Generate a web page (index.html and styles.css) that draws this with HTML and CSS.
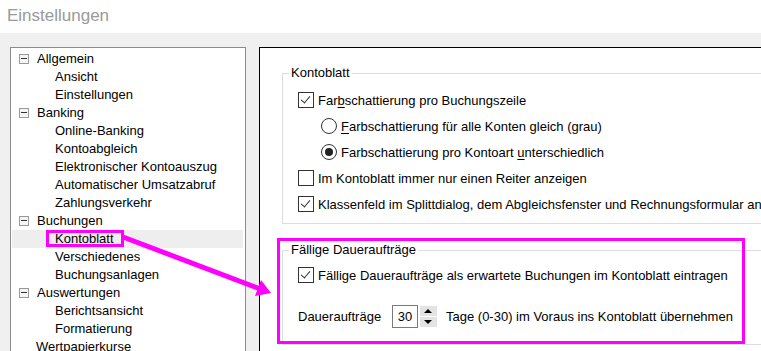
FILE: index.html
```html
<!DOCTYPE html>
<html lang="de">
<head>
  <meta charset="UTF-8" />
  <title>Einstellungen</title>
  <link rel="stylesheet" href="styles.css">
</head>
<body>
  <div class="titlebar">Einstellungen</div>

  <div class="main">
    <ul class="tree">
      <li class="node"><span class="toggle"></span>Allgemein</li>
      <li class="leaf">Ansicht</li>
      <li class="leaf">Einstellungen</li>
      <li class="node"><span class="toggle"></span>Banking</li>
      <li class="leaf">Online-Banking</li>
      <li class="leaf">Kontoabgleich</li>
      <li class="leaf">Elektronischer Kontoauszug</li>
      <li class="leaf">Automatischer Umsatzabruf</li>
      <li class="leaf">Zahlungsverkehr</li>
      <li class="node"><span class="toggle"></span>Buchungen</li>
      <li class="leaf selected">Kontoblatt</li>
      <li class="leaf">Verschiedenes</li>
      <li class="leaf">Buchungsanlagen</li>
      <li class="node"><span class="toggle"></span>Auswertungen</li>
      <li class="leaf">Berichtsansicht</li>
      <li class="leaf">Formatierung</li>
      <li class="node plain">Wertpapierkurse</li>
    </ul>

    <div class="page">
      <fieldset class="group group-konto">
        <legend>Kontoblatt</legend>
        <div class="row"><span class="check on"></span><span>Far<u>b</u>schattierung pro Buchungszeile</span></div>
        <div class="row sub"><span class="radio"></span><span><u>F</u>arbschattierung für alle Konten gleich (grau)</span></div>
        <div class="row sub"><span class="radio on"></span><span>Farbschattierung pro Kontoart <u>u</u>nterschiedlich</span></div>
        <div class="row"><span class="check"></span><span>Im Kontoblatt immer nur einen Reiter anzeigen</span></div>
        <div class="row"><span class="check on"></span><span>Klassenfeld im Splittdialog, dem Abgleichsfenster und Rechnungsformular anzeigen</span></div>
      </fieldset>

      <fieldset class="group group-dauer">
        <legend>Fällige Daueraufträge</legend>
        <div class="row"><span class="check on"></span><span>Fällige Daueraufträge als erwartete Buchungen im Kontoblatt eintragen</span></div>
        <div class="row spin-row">
          <span class="spin-label">Daueraufträge</span>
          <span class="spin-value">30</span>
          <span class="spin-buttons">
            <span class="spin-btn up"></span>
            <span class="spin-btn down"></span>
          </span>
          <span class="spin-text">Tage (0-30) im Voraus ins Kontoblatt übernehmen</span>
        </div>
      </fieldset>
    </div>
  </div>

  <svg class="annotations" width="761" height="351" viewBox="0 0 761 351">
    <rect x="47.5" y="231.5" width="75" height="14" fill="none" stroke="#ff00ff" stroke-width="3"/>
    <rect x="278.5" y="239.5" width="465" height="103" fill="none" stroke="#ff00ff" stroke-width="3"/>
    <line x1="123" y1="237" x2="259" y2="288.5" stroke="#ff00ff" stroke-width="5"/>
    <polygon points="271,293 255,296 261,280" fill="#ff00ff"/>
  </svg>
</body>
</html>
```

FILE: styles.css
```css
html, body {
  margin: 0;
  overflow: hidden;
}
body {
  width: 761px;
  height: 351px;
  background: #f0f0f0;
  font-family: 'Liberation Sans', Arial, sans-serif;
  font-size: 13px;
  color: #000;
  position: relative;
}
.titlebar {
  height: 33px;
  line-height: 32px;
  background: #fff;
  color: #999;
  font-size: 17px;
  padding-left: 7px;
}
.main {
  display: flex;
  padding-top: 14px;
}

/* tree */
.tree {
  list-style: none;
  margin: 0 0 0 10px;
  padding: 2px 0 0 0;
  width: 234px;
  height: 320px;
  flex: none;
  background: #fff;
  border: 1px solid #8c8c8c;
}
.tree li {
  height: 18px;
  line-height: 18px;
  display: flex;
  align-items: center;
  white-space: nowrap;
}
.tree .node {
  padding-left: 8px;
}
.tree .node.plain {
  padding-left: 25px;
}
.tree .leaf {
  padding-left: 44px;
}
.tree .selected {
  background: #eeeeee;
  margin: 0 2px 0 1px;
  padding-left: 43px;
}
.toggle {
  width: 8px;
  height: 8px;
  border: 1px solid #9a9a9a;
  margin-right: 8px;
  position: relative;
  background: #f6f6f6;
}
.toggle::after {
  content: "";
  position: absolute;
  left: 1px;
  right: 1px;
  top: 3px;
  height: 1px;
  background: #333;
}

/* right page */
.page {
  flex: none;
  width: 600px;
  height: 320px;
  margin-left: 13px;
  background: #fff;
  border-top: 1px solid #000;
  border-left: 1px solid #000;
}
.group {
  width: 560px;
  margin: 0 0 0 22px;
  padding: 0 0 0 6px;
  border: 1px solid #dcdcdc;
}
.group legend {
  padding: 0 2px;
  line-height: 16px;
}
.group-konto {
  margin-top: 17px;
  padding-top: 6px;
  padding-bottom: 6px;
}
.group-dauer {
  margin-top: 18px;
  padding-top: 4px;
  padding-bottom: 16px;
}
.row {
  height: 26px;
  display: flex;
  align-items: center;
  margin-left: 9px;
  white-space: nowrap;
}
.row.sub {
  margin-left: 32px;
}
.row u {
  text-decoration-thickness: 1px;
  text-underline-offset: 2px;
}
.check {
  width: 14px;
  height: 14px;
  border: 1px solid #333;
  background: #fff;
  margin-right: 4px;
  position: relative;
  flex: none;
}
.check.on::after {
  content: "";
  position: absolute;
  left: 4px;
  top: 1px;
  width: 4px;
  height: 8px;
  border-right: 1px solid #333;
  border-bottom: 1px solid #333;
  transform: rotate(40deg);
}
.radio {
  width: 14px;
  height: 14px;
  border: 1px solid #333;
  border-radius: 50%;
  background: #fff;
  margin-right: 4px;
  position: relative;
  flex: none;
}
.radio.on::after {
  content: "";
  position: absolute;
  left: 3px;
  top: 3px;
  width: 8px;
  height: 8px;
  border-radius: 50%;
  background: #222;
}
.group-dauer .row:first-of-type {
  margin-bottom: 17px;
}
.spin-row {
  height: 23px;
}
.spin-label {
  width: 94px;
}
.spin-value {
  width: 24px;
  height: 21px;
  border: 1px solid #7a7a7a;
  line-height: 21px;
  text-align: center;
}
.spin-buttons {
  display: flex;
  flex-direction: column;
  gap: 1px;
  margin-left: 2px;
  width: 17px;
  height: 21px;
}
.spin-btn {
  flex: 1;
  background: #e3e3e3;
  position: relative;
}
.spin-btn::after {
  content: "";
  position: absolute;
  left: 4px;
  top: 3px;
  border-left: 4px solid transparent;
  border-right: 4px solid transparent;
}
.spin-btn.up::after {
  border-bottom: 4px solid #000;
}
.spin-btn.down::after {
  border-top: 4px solid #000;
}
.spin-text {
  margin-left: 9px;
}

.annotations {
  position: absolute;
  left: 0;
  top: 0;
  pointer-events: none;
}
```
